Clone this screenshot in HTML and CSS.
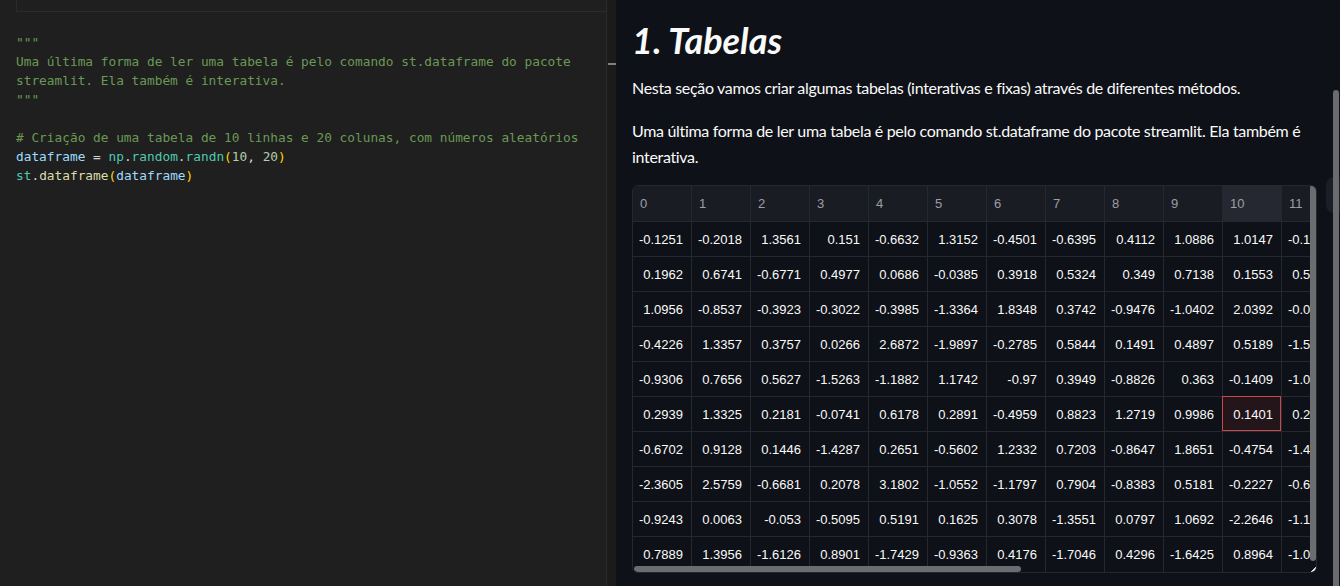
FILE: index.html
```html
<!DOCTYPE html>
<html lang="pt-BR">
<head>
<meta charset="utf-8">
<title>1. Tabelas</title>
<link rel="stylesheet" href="styles.css">
</head>
<body>
<div class="screen">
  <section class="editor">
    <div class="prev-cell"></div>
    <div class="code">
      <div class="ln"><span class="cm">"""</span></div>
      <div class="ln"><span class="cm">Uma última forma de ler uma tabela é pelo comando st.dataframe do pacote</span></div>
      <div class="ln"><span class="cm">streamlit. Ela também é interativa.</span></div>
      <div class="ln"><span class="cm">"""</span></div>
      <div class="ln"> </div>
      <div class="ln"><span class="cm"># Criação de uma tabela de 10 linhas e 20 colunas, com números aleatórios</span></div>
      <div class="ln"><span class="var">dataframe</span> = <span class="mod">np</span>.<span class="mod">random</span>.<span class="mod">randn</span><span class="br">(</span><span class="num">10</span>, <span class="num">20</span><span class="br">)</span></div>
      <div class="ln"><span class="mod">st</span>.<span class="fn">dataframe</span><span class="br">(</span><span class="var">dataframe</span><span class="br">)</span></div>
    </div>
  </section>
  <div class="gutter"><div class="gutter-mark"></div></div>
  <main class="app">
    <h1 class="title">1. Tabelas</h1>
    <p class="text first">Nesta seção vamos criar algumas tabelas (interativas e fixas) através de diferentes métodos.</p>
    <p class="text second">Uma última forma de ler uma tabela é pelo comando st.dataframe do pacote streamlit. Ela também é interativa.</p>
    <div class="df">
      <div class="viewport">
        <div class="grid">
          <div class="h">0</div><div class="h">1</div><div class="h">2</div><div class="h">3</div><div class="h">4</div><div class="h">5</div><div class="h">6</div><div class="h">7</div><div class="h">8</div><div class="h">9</div><div class="h focus">10</div><div class="h">11</div>
          <div class="c">-0.1251</div><div class="c">-0.2018</div><div class="c">1.3561</div><div class="c">0.151</div><div class="c">-0.6632</div><div class="c">1.3152</div><div class="c">-0.4501</div><div class="c">-0.6395</div><div class="c">0.4112</div><div class="c">1.0886</div><div class="c">1.0147</div><div class="c">-0.1873</div>
          <div class="c">0.1962</div><div class="c">0.6741</div><div class="c">-0.6771</div><div class="c">0.4977</div><div class="c">0.0686</div><div class="c">-0.0385</div><div class="c">0.3918</div><div class="c">0.5324</div><div class="c">0.349</div><div class="c">0.7138</div><div class="c">0.1553</div><div class="c">0.5412</div>
          <div class="c">1.0956</div><div class="c">-0.8537</div><div class="c">-0.3923</div><div class="c">-0.3022</div><div class="c">-0.3985</div><div class="c">-1.3364</div><div class="c">1.8348</div><div class="c">0.3742</div><div class="c">-0.9476</div><div class="c">-1.0402</div><div class="c">2.0392</div><div class="c">-0.0268</div>
          <div class="c">-0.4226</div><div class="c">1.3357</div><div class="c">0.3757</div><div class="c">0.0266</div><div class="c">2.6872</div><div class="c">-1.9897</div><div class="c">-0.2785</div><div class="c">0.5844</div><div class="c">0.1491</div><div class="c">0.4897</div><div class="c">0.5189</div><div class="c">-1.5031</div>
          <div class="c">-0.9306</div><div class="c">0.7656</div><div class="c">0.5627</div><div class="c">-1.5263</div><div class="c">-1.1882</div><div class="c">1.1742</div><div class="c">-0.97</div><div class="c">0.3949</div><div class="c">-0.8826</div><div class="c">0.363</div><div class="c">-0.1409</div><div class="c">-1.0417</div>
          <div class="c">0.2939</div><div class="c">1.3325</div><div class="c">0.2181</div><div class="c">-0.0741</div><div class="c">0.6178</div><div class="c">0.2891</div><div class="c">-0.4959</div><div class="c">0.8823</div><div class="c">1.2719</div><div class="c">0.9986</div><div class="c sel">0.1401</div><div class="c">0.2395</div>
          <div class="c">-0.6702</div><div class="c">0.9128</div><div class="c">0.1446</div><div class="c">-1.4287</div><div class="c">0.2651</div><div class="c">-0.5602</div><div class="c">1.2332</div><div class="c">0.7203</div><div class="c">-0.8647</div><div class="c">1.8651</div><div class="c">-0.4754</div><div class="c">-1.4528</div>
          <div class="c">-2.3605</div><div class="c">2.5759</div><div class="c">-0.6681</div><div class="c">0.2078</div><div class="c">3.1802</div><div class="c">-1.0552</div><div class="c">-1.1797</div><div class="c">0.7904</div><div class="c">-0.8383</div><div class="c">0.5181</div><div class="c">-0.2227</div><div class="c">-0.6604</div>
          <div class="c">-0.9243</div><div class="c">0.0063</div><div class="c">-0.053</div><div class="c">-0.5095</div><div class="c">0.5191</div><div class="c">0.1625</div><div class="c">0.3078</div><div class="c">-1.3551</div><div class="c">0.0797</div><div class="c">1.0692</div><div class="c">-2.2646</div><div class="c">-1.1372</div>
          <div class="c">0.7889</div><div class="c">1.3956</div><div class="c">-1.6126</div><div class="c">0.8901</div><div class="c">-1.7429</div><div class="c">-0.9363</div><div class="c">0.4176</div><div class="c">-1.7046</div><div class="c">0.4296</div><div class="c">-1.6425</div><div class="c">0.8964</div><div class="c">-1.0921</div>
        </div>
      </div>
      <div class="hthumb"></div>
      <div class="vthumb"></div>
      <div class="resize"></div>
    </div>
    <div class="toolbar"></div>
    <div class="page-thumb"></div>
  </main>
</div>
</body>
</html>
```

FILE: styles.css
```css
* { box-sizing: border-box; }
html, body { margin: 0; padding: 0; }
body {
  width: 1340px;
  height: 586px;
  overflow: hidden;
  background: #0e1117;
}
.screen {
  display: flex;
  height: 586px;
}

/* ---------- editor ---------- */
.editor {
  width: 607px;
  flex: none;
  background: #1f1f1f;
  border-right: 1px solid #2b2b2b;
}
.prev-cell {
  margin-left: 16px;
  height: 12px;
  border-left: 1px solid #2b2b2b;
  border-bottom: 1px solid #2b2b2b;
}
.code {
  padding: 21px 0 0 16px;
  font-family: "DejaVu Sans Mono", "Liberation Mono", monospace;
  font-size: 12.8px;
  line-height: 19px;
  color: #d4d4d4;
}
.ln {
  height: 19px;
  white-space: pre;
}
.cm { color: #6a9955; }
.var { color: #9cdcfe; }
.mod { color: #4ec9b0; }
.fn { color: #dcdcaa; }
.num { color: #b5cea8; }
.br { color: #ffd700; }

.gutter {
  width: 9px;
  flex: none;
  background: #1b1b1b;
  position: relative;
}
.gutter-mark {
  position: absolute;
  top: 63px;
  left: 1px;
  width: 8px;
  height: 2px;
  background: #808080;
}

/* ---------- streamlit app ---------- */
.app {
  flex: 1;
  position: relative;
  padding: 19px 0 0 16px;
  font-family: Lato, "Open Sans", sans-serif;
  color: #fafafa;
}
.title {
  margin: 0;
  font-size: 36px;
  line-height: 43px;
  font-weight: 700;
  font-style: italic;
  color: #fafafa;
}
.text {
  margin: 0;
  width: 684px;
  font-size: 16px;
  line-height: 26px;
  letter-spacing: -0.32px;
}
.text.first { margin-top: 13px; }
.text.second { margin-top: 17px; }

.df {
  position: relative;
  margin-top: 15px;
  width: 685px;
  border: 1px solid #262830;
  border-radius: 6px;
  overflow: hidden;
  font-family: "Liberation Sans", Arial, sans-serif;
  font-size: 13px;
}
.viewport {
  width: 677px;
  overflow: hidden;
}
.grid {
  display: grid;
  grid-template-columns: repeat(12, 59px);
  grid-template-rows: 36px;
  grid-auto-rows: 35px;
  width: 708px;
  background: #0e1117;
}
.h, .c {
  display: flex;
  align-items: center;
  border-right: 1px solid #262830;
  border-bottom: 1px solid #262830;
  white-space: nowrap;
}
.h {
  background: #1a1c24;
  color: #9c9ea4;
  padding-left: 7px;
}
.h.focus { background: #262831; }
.c {
  justify-content: flex-end;
  padding-right: 8px;
  color: #fafafa;
}
.c:nth-last-child(-n+12) { border-bottom: none; }
.c.sel {
  position: relative;
  background: #24151a;
}
.c.sel::after {
  content: "";
  position: absolute;
  left: -1px;
  top: -1px;
  right: 0;
  bottom: 0;
  border: 1px solid #c9484b;
}
.hthumb {
  position: absolute;
  left: 1px;
  bottom: 0;
  width: 387px;
  height: 6px;
  border-radius: 3px;
  background: #6c6d71;
}
.vthumb {
  position: absolute;
  right: 0;
  top: -1px;
  width: 6px;
  height: 376px;
  border-radius: 3px;
  background: #6c6d71;
}
.resize {
  position: absolute;
  right: 0;
  bottom: 0;
  width: 6px;
  height: 6px;
  background: linear-gradient(135deg, transparent 50%, #e6e6e6 50%);
}
.toolbar {
  position: absolute;
  left: 710px;
  top: 177px;
  width: 24px;
  height: 36px;
  border-radius: 8px;
  background: #1b1e26;
}
.page-thumb {
  position: absolute;
  left: 717px;
  top: 90px;
  width: 6px;
  height: 500px;
  border-radius: 3px;
  background: #6a6b6e;
}
```
